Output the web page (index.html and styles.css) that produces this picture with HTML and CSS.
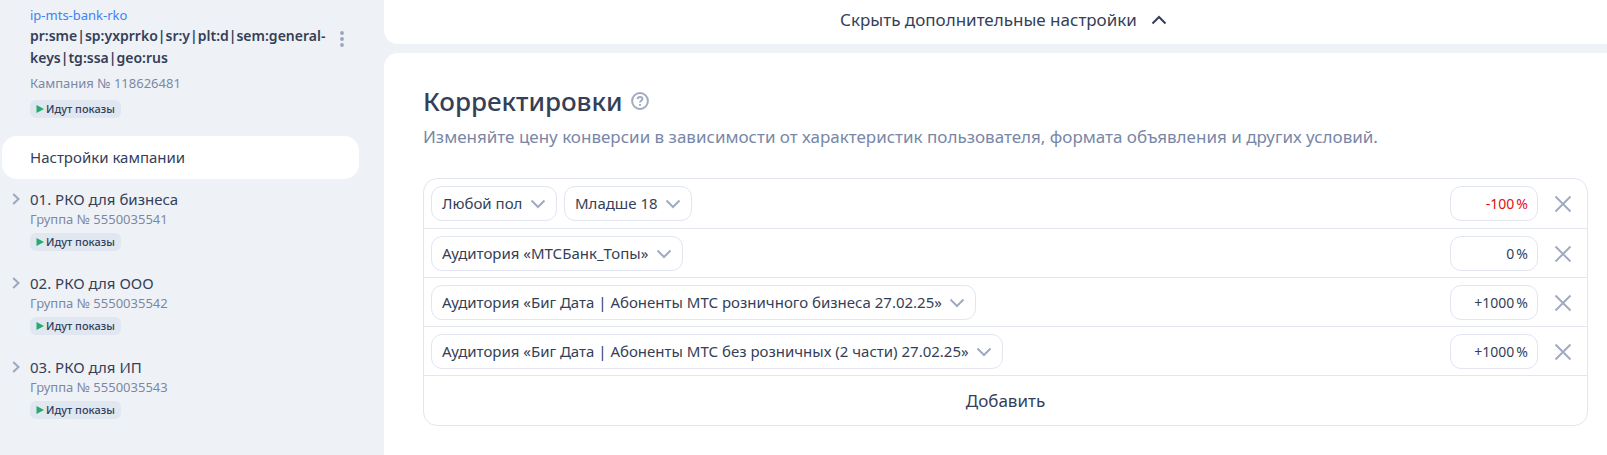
FILE: index.html
```html
<!DOCTYPE html>
<html lang="ru">
<head>
<meta charset="utf-8">
<title>Настройки кампании</title>
<link rel="stylesheet" href="styles.css">
</head>
<body>
<div class="layout">
  <aside class="sidebar">
    <header class="campaign">
      <a class="client" href="#client">ip-mts-bank-rko</a>
      <div class="campaign-head">
        <h2 class="campaign-name">pr:sme|sp:yxprrko|sr:y|plt:d|sem:general-keys|tg:ssa|geo:rus</h2>
        <button class="kebab" type="button" aria-label="Действия">
          <svg width="4" height="18" viewBox="0 0 4 18"><circle cx="2" cy="3" r="1.9"/><circle cx="2" cy="9" r="1.9"/><circle cx="2" cy="15" r="1.9"/></svg>
        </button>
      </div>
      <span class="meta">Кампания № 118626481</span>
      <span class="status"><svg class="play" width="8" height="8" viewBox="0 0 8 8"><path d="M.5 0L8 4 .5 8z"/></svg>Идут показы</span>
    </header>
    <nav class="nav">
      <a class="nav-current" href="#settings">Настройки кампании</a>
      <div class="group">
        <button class="expand" type="button" aria-label="Развернуть"><svg width="8" height="12" viewBox="0 0 8 12"><path d="M1.2 1L6.5 6 1.2 11"/></svg></button>
        <a class="group-name" href="#g1">01. РКО для бизнеса</a>
        <span class="meta">Группа № 5550035541</span>
        <span class="status"><svg class="play" width="8" height="8" viewBox="0 0 8 8"><path d="M.5 0L8 4 .5 8z"/></svg>Идут показы</span>
      </div>
      <div class="group">
        <button class="expand" type="button" aria-label="Развернуть"><svg width="8" height="12" viewBox="0 0 8 12"><path d="M1.2 1L6.5 6 1.2 11"/></svg></button>
        <a class="group-name" href="#g2">02. РКО для ООО</a>
        <span class="meta">Группа № 5550035542</span>
        <span class="status"><svg class="play" width="8" height="8" viewBox="0 0 8 8"><path d="M.5 0L8 4 .5 8z"/></svg>Идут показы</span>
      </div>
      <div class="group">
        <button class="expand" type="button" aria-label="Развернуть"><svg width="8" height="12" viewBox="0 0 8 12"><path d="M1.2 1L6.5 6 1.2 11"/></svg></button>
        <a class="group-name" href="#g3">03. РКО для ИП</a>
        <span class="meta">Группа № 5550035543</span>
        <span class="status"><svg class="play" width="8" height="8" viewBox="0 0 8 8"><path d="M.5 0L8 4 .5 8z"/></svg>Идут показы</span>
      </div>
    </nav>
  </aside>
  <main class="main">
    <section class="toggle-card">
      <button class="toggle" type="button">Скрыть дополнительные настройки
        <svg width="16" height="10" viewBox="0 0 16 10"><path d="M1.500 8.500L8 2l6.500 6.500"/></svg>
      </button>
    </section>
    <section class="card">
      <div class="title-row">
        <h1 class="title">Корректировки</h1>
        <button class="help" type="button" aria-label="Справка">
          <svg width="18" height="18" viewBox="0 0 18 18"><circle cx="9" cy="9" r="7.900"/><path d="M6.600 7.100C6.700 5.600 7.700 4.900 9 4.900s2.400.8 2.400 2c0 1.800-2.400 1.900-2.400 3.600"/><path d="M9 12v1.700"/></svg>
        </button>
      </div>
      <p class="lead">Изменяйте цену конверсии в зависимости от характеристик пользователя, формата объявления и других условий.</p>
      <div class="rules">
        <div class="rule">
          <span class="pick"><select aria-label="Пол"><option>Любой пол</option></select><svg class="chevron" width="16" height="10" viewBox="0 0 16 10"><path d="M1.500 1.500L8 8l6.500-6.500"/></svg></span>
          <span class="pick"><select aria-label="Возраст"><option>Младше 18</option></select><svg class="chevron" width="16" height="10" viewBox="0 0 16 10"><path d="M1.500 1.500L8 8l6.500-6.500"/></svg></span>
          <label class="amount negative"><input type="text" value="-100" aria-label="Корректировка, %">%</label>
          <button class="remove" type="button" aria-label="Удалить"><svg width="18" height="18" viewBox="0 0 18 18"><path d="M1.500 1.500l15 15M16.500 1.500l-15 15"/></svg></button>
        </div>
        <div class="rule">
          <span class="pick"><select aria-label="Аудитория"><option>Аудитория «МТСБанк_Топы»</option></select><svg class="chevron" width="16" height="10" viewBox="0 0 16 10"><path d="M1.500 1.500L8 8l6.500-6.500"/></svg></span>
          <label class="amount"><input type="text" value="0" aria-label="Корректировка, %">%</label>
          <button class="remove" type="button" aria-label="Удалить"><svg width="18" height="18" viewBox="0 0 18 18"><path d="M1.500 1.500l15 15M16.500 1.500l-15 15"/></svg></button>
        </div>
        <div class="rule">
          <span class="pick"><select aria-label="Аудитория"><option>Аудитория «Биг Дата | Абоненты МТС розничного бизнеса 27.02.25»</option></select><svg class="chevron" width="16" height="10" viewBox="0 0 16 10"><path d="M1.500 1.500L8 8l6.500-6.500"/></svg></span>
          <label class="amount"><input type="text" value="+1000" aria-label="Корректировка, %">%</label>
          <button class="remove" type="button" aria-label="Удалить"><svg width="18" height="18" viewBox="0 0 18 18"><path d="M1.500 1.500l15 15M16.500 1.500l-15 15"/></svg></button>
        </div>
        <div class="rule">
          <span class="pick"><select aria-label="Аудитория"><option>Аудитория «Биг Дата | Абоненты МТС без розничных (2 части) 27.02.25»</option></select><svg class="chevron" width="16" height="10" viewBox="0 0 16 10"><path d="M1.500 1.500L8 8l6.500-6.500"/></svg></span>
          <label class="amount"><input type="text" value="+1000" aria-label="Корректировка, %">%</label>
          <button class="remove" type="button" aria-label="Удалить"><svg width="18" height="18" viewBox="0 0 18 18"><path d="M1.500 1.500l15 15M16.500 1.500l-15 15"/></svg></button>
        </div>
        <button class="add" type="button">Добавить</button>
      </div>
    </section>
  </main>
</div>
</body>
</html>
```

FILE: styles.css
```css
* { box-sizing: border-box; }

body {
  margin: 0;
  background: #eef2f7;
  color: #343f58;
  font-family: "Noto Sans", "Open Sans", sans-serif;
  font-size: 15px;
  line-height: 20px;
}

h1, h2, p { margin: 0; }
a { color: inherit; text-decoration: none; }
svg { display: block; flex: none; fill: none; stroke-width: 2; }

button {
  padding: 0;
  border: 0;
  background: none;
  color: inherit;
  font: inherit;
  cursor: pointer;
}

.layout {
  display: grid;
  grid-template-columns: 384px minmax(0, 1fr);
  min-height: 100vh;
}

/* Sidebar */
.sidebar { padding: 5px 25px 0 2px; }

.campaign {
  display: flex;
  flex-direction: column;
  align-items: flex-start;
  padding: 0 10px 18px 28px;
}
.client { color: #4080f8; font-size: 13px; }
.campaign-head { display: flex; align-self: stretch; }
.campaign-name {
  flex: 1;
  font-size: 14px;
  font-weight: 600;
  line-height: 22px;
}
.kebab { align-self: flex-start; padding: 5px 5px 0; }
.kebab svg { fill: #9aa5bd; }

.meta { color: #7c88a3; font-size: 13px; line-height: 20px; }
.campaign .meta { margin: 4px 0 7px; }

.status {
  display: inline-flex;
  align-items: center;
  gap: 2px;
  height: 18px;
  padding: 0 6px;
  border-radius: 6px;
  background: #e0e7f1;
  font-size: 11px;
  font-weight: 500;
}
.status .play { fill: #25aa70; }

.nav { display: flex; flex-direction: column; }
.nav-current {
  padding: 11px 28px 12px;
  border-radius: 15px;
  background: #fff;
}
.group {
  display: grid;
  grid-template-columns: 28px 1fr;
  justify-items: start;
  padding: 10px 0 12px;
}
.group > * { grid-column: 2; }
.group > .expand {
  grid-area: 1 / 1;
  align-self: center;
  padding: 0 10px;
}
.group .status { margin-top: 4px; }
.expand svg { stroke: #9ca7c0; }

/* Content */
.main {
  display: flex;
  flex-direction: column;
  gap: 9px;
}
.toggle-card {
  display: flex;
  justify-content: center;
  padding: 8px 0 12px 16px;
  border-radius: 0 0 0 14px;
  background: #fff;
}
.toggle {
  display: flex;
  align-items: center;
  gap: 14px;
  font-size: 17px;
  line-height: 24px;
}
.toggle svg { stroke: #343f58; }

.card {
  flex: 1;
  padding: 30px 19px 30px 39px;
  border-radius: 14px 0 0 0;
  background: #fff;
}
.title-row { display: flex; align-items: center; gap: 8px; }
.title { font-size: 26px; font-weight: 500; line-height: 36px; }
.help svg { stroke: #a0abc2; }
.lead {
  margin: 5px 0 29px;
  color: #7887a6;
  font-size: 17px;
  line-height: 25px;
}

.rules {
  border: 1px solid #e3e5f0;
  border-radius: 14px;
}
.rule {
  display: flex;
  align-items: center;
  gap: 7px;
  padding: 7px 15px 6px 7px;
  border-bottom: 1px solid #e3e5f0;
}
.rule:first-child { padding-bottom: 7px; }
.pick { position: relative; }
.pick select {
  display: block;
  height: 35px;
  padding: 0 33px 1px 10px;
  border: 1px solid #e3e5f0;
  border-radius: 11px;
  background: #fff;
  color: inherit;
  font: inherit;
  appearance: none;
}
.chevron {
  position: absolute;
  top: 13px;
  right: 11px;
  stroke: #a0abc2;
  pointer-events: none;
}
.amount {
  display: flex;
  align-items: center;
  gap: 2px;
  width: 88px;
  height: 35px;
  margin-left: auto;
  padding: 0 9px;
  border: 1px solid #e3e5f0;
  border-radius: 11px;
  font-size: 14px;
}
.amount input {
  flex: 1;
  min-width: 0;
  padding: 0;
  border: 0;
  background: none;
  color: inherit;
  font: inherit;
  text-align: right;
}
.negative { color: #e01010; }
.remove { padding-left: 9px; }
.remove svg { stroke: #a0abc2; }
.add {
  display: block;
  width: 100%;
  padding: 13px 0 12px;
  font-size: 17px;
  line-height: 24px;
}
```
